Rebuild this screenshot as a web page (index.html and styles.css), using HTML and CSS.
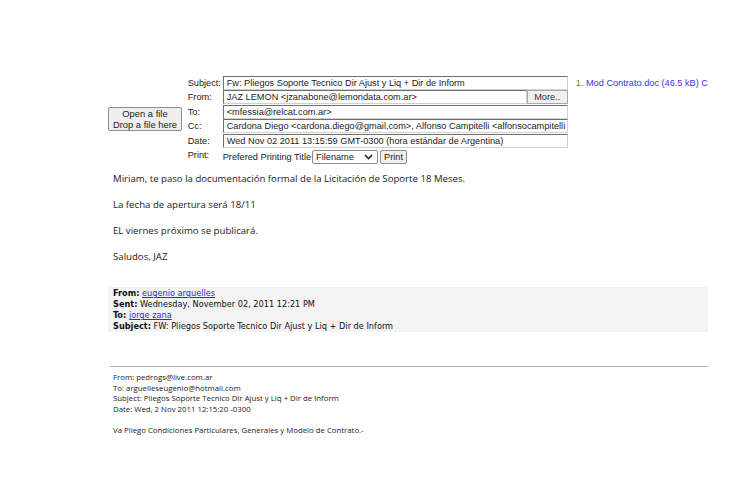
FILE: index.html
```html
<!DOCTYPE html>
<html>
<head>
<meta charset="utf-8">
<link rel="stylesheet" href="styles.css">
</head>
<body>
<div class="page">
  <div class="header">
    <div class="opencol">
      <button class="openbtn">Open a file<br>Drop a file here</button>
    </div>
    <div class="fields">
      <div class="lbl">Subject:</div><div class="box">Fw: Pliegos Soporte Tecnico Dir Ajust y Liq + Dir de Inform</div>
      <div class="lbl">From:</div><div class="fromrow"><div class="box grow">JAZ LEMON &lt;jzanabone@lemondata.com.ar&gt;</div><button class="more">More..</button></div>
      <div class="lbl">To:</div><div class="box">&lt;mfessia@relcat.com.ar&gt;</div>
      <div class="lbl">Cc:</div><div class="box">Cardona Diego &lt;cardona.diego@gmail.com&gt;, Alfonso Campitelli &lt;alfonsocampitelli</div>
      <div class="lbl">Date:</div><div class="box">Wed Nov 02 2011 13:15:59 GMT-0300 (hora estándar de Argentina)</div>
      <div class="lbl">Print:</div><div class="printrow"><span class="pref">Prefered Printing Title</span><span class="sel">Filename<svg width="9" height="6" viewBox="0 0 9 6"><path d="M1 1l3.5 3.5L8 1" fill="none" stroke="#222" stroke-width="1.6"/></svg></span><button class="printbtn">Print</button></div>
    </div>
    <div class="attach"><span class="num">1.</span> <a href="#">Mod Contrato.doc (46.5 kB) C</a></div>
  </div>

  <div class="msg">
    <p>Miriam, te paso la documentación formal de la Licitación de Soporte 18 Meses.</p>
    <p>La fecha de apertura será 18/11</p>
    <p>EL viernes próximo se publicará.</p>
    <p>Saludos, JAZ</p>
  </div>

  <div class="fwd">
    <div><b>From:</b> <a href="#">eugenio arguelles</a></div>
    <div><b>Sent:</b> Wednesday, November 02, 2011 12:21 PM</div>
    <div><b>To:</b> <a href="#">jorge zana</a></div>
    <div><b>Subject:</b> FW: Pliegos Soporte Tecnico Dir Ajust y Liq + Dir de Inform</div>
  </div>

  <hr class="rule">

  <div class="orig">
    <div>From: pedrogs@live.com.ar</div>
    <div>To: arguelleseugenio@hotmail.com</div>
    <div>Subject: Pliegos Soporte Tecnico Dir Ajust y Liq + Dir de Inform</div>
    <div>Date: Wed, 2 Nov 2011 12:15:20 -0300</div>
    <div class="blank"></div>
    <div>Va Pliego Condiciones Particulares, Generales y Modelo de Contrato.-</div>
  </div>
</div>
</body>
</html>
```

FILE: styles.css
```css
html, body {
  margin: 0;
  padding: 0;
  background: #fff;
}
.page {
  padding: 76px 0 0 108px;
  width: 600px;
  font-family: "Liberation Sans", Arial, sans-serif;
}
.header {
  display: flex;
  align-items: flex-start;
  font-size: 9.2px;
  color: #222;
}
.opencol {
  width: 80px;
  padding-top: 31px;
}
.openbtn {
  width: 74px;
  height: 24px;
  padding: 0;
  font-family: "Liberation Sans", Arial, sans-serif;
  font-size: 9.4px;
  line-height: 11px;
  color: #222;
  background: #efefef;
  border: 1px solid #8f8f8f;
  border-radius: 2px;
}
.fields {
  display: grid;
  grid-template-columns: 35px 345px;
  grid-auto-rows: 14.4px;
  align-items: stretch;
}
.lbl {
  line-height: 14px;
  white-space: nowrap;
}
.box {
  box-sizing: border-box;
  height: 14px;
  line-height: 12px;
  padding: 0 3px;
  border: 1px solid #9a9a9a;
  border-top-color: #6e6e6e;
  border-left-color: #6e6e6e;
  border-bottom-color: #d0d0d0;
  border-right-color: #d0d0d0;
  white-space: nowrap;
  overflow: hidden;
  background: #fff;
}
.fromrow {
  display: flex;
  height: 14px;
}
.grow {
  flex: 1;
}
.more {
  box-sizing: border-box;
  width: 41px;
  height: 14px;
  padding: 0;
  font-family: "Liberation Sans", Arial, sans-serif;
  font-size: 9.2px;
  line-height: 12px;
  color: #333;
  background: #efefef;
  border: 1px solid #a8a8a8;
}
.printrow {
  display: flex;
  align-items: center;
  height: 15px;
  margin-top: 1.5px;
  white-space: nowrap;
}
.pref {
  margin-right: 1px;
}
.sel {
  box-sizing: border-box;
  display: inline-flex;
  align-items: center;
  justify-content: space-between;
  width: 66px;
  height: 14px;
  padding: 0 4px 0 3px;
  border: 1px solid #8a8a8a;
  border-radius: 2px;
  background: #fff;
}
.printbtn {
  box-sizing: border-box;
  height: 14px;
  margin-left: 2px;
  padding: 0 3px;
  font-family: "Liberation Sans", Arial, sans-serif;
  font-size: 9.2px;
  line-height: 12px;
  color: #222;
  background: #efefef;
  border: 1px solid #8f8f8f;
  border-radius: 2px;
}
.attach {
  margin-left: 8px;
  white-space: nowrap;
  line-height: 14px;
}
.attach .num {
  color: #5b8a3a;
}
.attach a {
  color: #3535e8;
  text-decoration: none;
}
.msg {
  margin-top: 9px;
  padding-left: 5px;
  font-family: "Open Sans", "Noto Sans", sans-serif;
  font-size: 9.65px;
  color: #222;
}
.msg p {
  margin: 0 0 11px 0;
  line-height: 15px;
}
.fwd {
  margin-top: 23px;
  width: 600px;
  box-sizing: border-box;
  background: #f3f3f3;
  padding: 1px 0 0 5px;
  font-family: "DejaVu Sans Condensed", "DejaVu Sans", sans-serif;
  font-size: 9.1px;
  line-height: 11px;
  color: #111;
}
.fwd a {
  color: #2a2ae0;
}
.rule {
  margin: 34px 0 0 2px;
  width: 598px;
  border: 0;
  border-top: 1px solid #b0b0b0;
  height: 0;
}
.orig {
  margin-top: 5px;
  padding-left: 5px;
  font-family: "Open Sans", "Noto Sans", sans-serif;
  font-size: 7.8px;
  line-height: 10.5px;
  color: #222;
}
.blank {
  height: 11px;
}
```
